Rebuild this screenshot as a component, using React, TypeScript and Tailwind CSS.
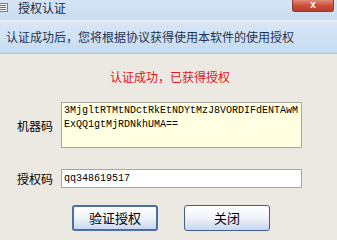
export default function App() {
    return (
        <div className="w-[337px] h-[240px] overflow-hidden flex flex-col bg-[#ece9e3] text-[12px] text-black font-['Noto_Sans_CJK_SC',sans-serif]">
            {/* title bar */}
            <div className="h-[20px] flex items-start bg-gradient-to-b from-[#d5e4f5] to-[#c9dcf2] shrink-0">
                <div className="w-[8px] h-[9px] mt-[3px] bg-[#f4f8f2] border-y border-r border-[#5c9b4a] flex flex-col justify-center gap-[1px] pr-[1px]">
                    <div className="h-[1px] bg-[#4c8f3c]" />
                    <div className="h-[1px] bg-[#4c8f3c]" />
                    <div className="h-[1px] bg-[#4c8f3c]" />
                </div>
                <span className="ml-[10px] pt-[1px] leading-[14px] text-[12px] text-[#1b2a3d]">授权认证</span>
                <div className="ml-auto mr-[3px] w-[42px] h-[12px] rounded-b-[3px] border border-t-0 border-[#8e3a2c] bg-gradient-to-b from-[#e08a78] via-[#c9503a] to-[#b8402c] flex items-center justify-center">
                    <span className="text-white text-[10px] leading-[10px] font-bold font-['Liberation_Sans',sans-serif] -mt-[2px]">x</span>
                </div>
            </div>
            {/* header band */}
            <div className="h-[34px] shrink-0 flex items-center pl-[6px] border-t border-[#eaf2fb] border-b border-b-[#aac3e0] bg-gradient-to-b from-[#dae8f7] to-[#c5dbf1]">
                <span className="text-[12px] leading-[14px] text-[#1e3350]">认证成功后，您将根据协议获得使用本软件的使用授权</span>
            </div>
            {/* body */}
            <div className="flex flex-col">
                <p className="mt-[15px] text-center leading-[16px] text-[#e0141e] pl-[3px]">认证成功，已获得授权</p>
                <div className="mt-[17px] flex items-center pl-[17px]">
                    <span className="w-[44px] leading-[14px] mt-[2px]">机器码</span>
                    <div className="w-[241px] h-[46px] bg-[#ffffe1] border border-[#a8a8a0] px-[2px] pt-[1px] font-['Liberation_Mono',monospace] text-[10px] leading-[14px] break-all">
                        3MjgltRTMtNDctRkEtNDYtMzJ8VORDIFdENTAwMExQQ1gtMjRDNkhUMA==
                    </div>
                </div>
                <div className="mt-[21px] flex items-center pl-[17px]">
                    <span className="w-[44px] leading-[14px]">授权码</span>
                    <div className="w-[241px] h-[19px] bg-white border border-[#a8a8a0] px-[2px] flex items-center font-['Liberation_Mono',monospace] text-[10px] leading-[14px]">
                        qq348619517
                    </div>
                </div>
                <div className="mt-[17px] flex pl-[72px] gap-[26px]">
                    <button className="w-[86px] h-[26px] rounded-[3px] border-2 border-[#4a6ea8] bg-gradient-to-b from-[#ffffff] via-[#eef2fa] to-[#c9d8f0] text-[13px] leading-[14px]">验证授权</button>
                    <button className="w-[86px] h-[26px] rounded-[3px] border border-[#3d5f94] bg-gradient-to-b from-[#ffffff] via-[#f0f3fa] to-[#c8d7ef] text-[13px] leading-[14px]">关闭</button>
                </div>
            </div>
        </div>
    )
}
